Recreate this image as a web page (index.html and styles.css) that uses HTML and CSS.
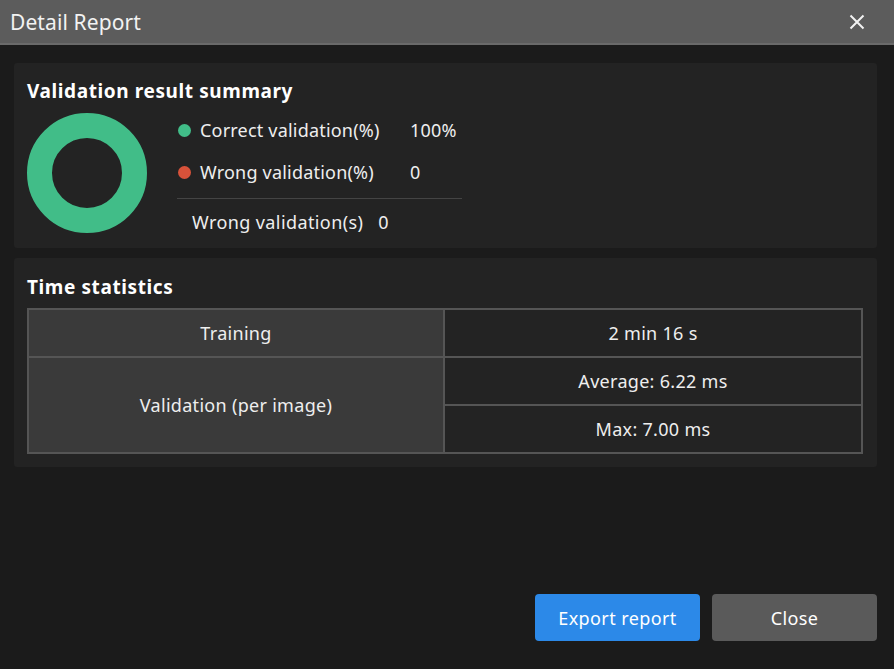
FILE: index.html
```html
<!DOCTYPE html>
<html lang="en">

<head>
    <meta charset="UTF-8">
    <meta name="viewport" content="width=device-width, initial-scale=1.0">
    <title>Detail Report</title>
    <link rel="stylesheet" href="styles.css">
</head>

<body>
    <header class="titlebar">
        <h1>Detail Report</h1>
        <svg class="btn-x" width="16" height="16" viewBox="0 0 16 16">
            <path d="M1.5 1.5 L14.5 14.5 M14.5 1.5 L1.5 14.5" stroke="#F2F2F2" stroke-width="2" fill="none"></path>
        </svg>
    </header>

    <div class="content">
        <section class="panel panel-summary">
            <h2>Validation result summary</h2>
            <div class="summary-body">
                <svg class="donut" width="120" height="120" viewBox="0 0 120 120">
                    <circle cx="60" cy="60" r="47.5" fill="none" stroke="#41bd88" stroke-width="25"></circle>
                </svg>
                <div class="legend">
                    <div class="legend-row">
                        <span class="dot dot-green"></span>
                        <span class="legend-label">Correct validation(%)</span>
                        <span class="legend-value">100%</span>
                    </div>
                    <div class="legend-row">
                        <span class="dot dot-red"></span>
                        <span class="legend-label">Wrong validation(%)</span>
                        <span class="legend-value">0</span>
                    </div>
                    <div class="legend-total">
                        Wrong validation(s)<span class="total-value">0</span>
                    </div>
                </div>
            </div>
        </section>

        <section class="panel panel-time">
            <h2>Time statistics</h2>
            <table class="time-table">
                <tr>
                    <td class="cell-name">Training</td>
                    <td>2 min 16 s</td>
                </tr>
                <tr>
                    <td class="cell-name" rowspan="2">Validation (per image)</td>
                    <td>Average: 6.22 ms</td>
                </tr>
                <tr>
                    <td>Max: 7.00 ms</td>
                </tr>
            </table>
        </section>
    </div>

    <footer class="actions">
        <button class="btn btn-export">Export report</button>
        <button class="btn btn-close">Close</button>
    </footer>
</body>

</html>
```

FILE: styles.css
```css
body {
    background-color: #1b1b1b;
    color: #EEEEEE;
    font-family: "Noto Sans", "Open Sans", sans-serif;
    margin: 0;
    padding: 0;
    width: 894px;
    height: 669px;
    display: flex;
    flex-direction: column;
    overflow: hidden;
}

.titlebar {
    height: 43px;
    background-color: #5c5c5c;
    border-bottom: 2px solid #6a6a6a;
    display: flex;
    align-items: center;
    justify-content: space-between;
    padding: 0 29px 0 10px;
}

.titlebar h1 {
    margin: 0;
    font-size: 21px;
    font-weight: normal;
    letter-spacing: 0.1px;
    color: #F2F2F2;
}

.btn-x {
    display: block;
}

.content {
    padding: 18px 17px 0 14px;
    display: flex;
    flex-direction: column;
    gap: 10px;
}

.panel {
    background-color: #232323;
    border-radius: 3px;
    padding: 16px 13px 0 13px;
}

.panel h2 {
    margin: 0;
    font-size: 19px;
    font-weight: bold;
    letter-spacing: 0.6px;
    color: #FFFFFF;
    line-height: 24px;
}

.panel-summary {
    height: 169px;
}

.summary-body {
    display: flex;
    margin-top: 9px;
}

.donut {
    display: block;
    margin-top: 1px;
}

.legend {
    margin-left: 30px;
    width: 285px;
}

.legend-row {
    display: flex;
    align-items: center;
    height: 42px;
    font-size: 18px;
    letter-spacing: 0.2px;
}

.legend-row:first-child {
    margin-top: -3px;
}

.dot {
    width: 13px;
    height: 13px;
    border-radius: 50%;
    margin: 0 9px 0 1px;
}

.dot-green {
    background-color: #41bd88;
}

.dot-red {
    background-color: #d8523a;
}

.legend-label {
    width: 210px;
}

.legend-total {
    border-top: 1px solid #444;
    margin-top: 5px;
    padding: 11px 0 0 15px;
    font-size: 18px;
    letter-spacing: 0.4px;
}

.total-value {
    margin-left: 15px;
}

.panel-time {
    height: 192px;
    padding-top: 17px;
}

.time-table {
    margin-top: 9px;
    width: 836px;
    border-collapse: collapse;
    font-size: 18px;
    letter-spacing: 0.3px;
    text-align: center;
}

.time-table td {
    border: 2px solid #555555;
    height: 46px;
    padding: 0;
}

.time-table .cell-name {
    background-color: #3a3a3a;
    width: 414px;
}

.actions {
    margin-top: auto;
    display: flex;
    justify-content: flex-end;
    gap: 12px;
    padding: 0 17px 28px 0;
}

.btn {
    width: 165px;
    height: 47px;
    border: none;
    border-radius: 4px;
    color: #FFFFFF;
    font-family: "Noto Sans", "Open Sans", sans-serif;
    font-size: 18px;
    letter-spacing: 0.4px;
    cursor: pointer;
}

.btn-export {
    background-color: #2c89e8;
}

.btn-close {
    background-color: #5a5a5a;
}
```
